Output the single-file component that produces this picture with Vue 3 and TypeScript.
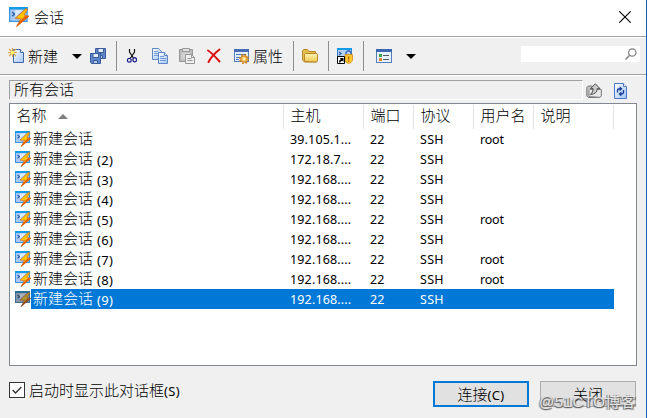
<script setup lang="ts">
interface Session {
  name: string
  suffix: string
  host: string
  user: string
}

const columns: string[] = ['名称', '主机', '端口', '协议', '用户名', '说明']

const hosts = ['39.105.1...', '172.18.7...', ...Array<string>(7).fill('192.168....')]
const rootRows = [0, 4, 6, 7]
const sessions: Session[] = hosts.map((host, i) => ({
  name: '新建会话',
  suffix: i ? `(${i + 1})` : '',
  host,
  user: rootRows.includes(i) ? 'root' : '',
}))
const selected = 8
</script>

<template>
  <svg class="defs" width="0" height="0">
    <defs>
      <linearGradient id="bolt" x1="0" y1="0" x2="0" y2="1">
        <stop offset="0" stop-color="#ffb000" />
        <stop offset=".45" stop-color="#ffc800" />
        <stop offset="1" stop-color="#f06a00" />
      </linearGradient>
      <linearGradient id="page" x1="0" y1="0" x2="1" y2="1">
        <stop offset="0" stop-color="#ffffff" />
        <stop offset="1" stop-color="#9fc4f6" />
      </linearGradient>
      <linearGradient id="fold" x1="0" y1="0" x2="0" y2="1">
        <stop offset="0" stop-color="#fff3b0" />
        <stop offset="1" stop-color="#f0c850" />
      </linearGradient>
      <symbol id="session" viewBox="0 0 16 16">
        <rect x=".5" y=".5" width="14" height="11" fill="#a9c9f2" stroke="#3a94e0" />
        <path d="M0 0h15v2H0z" fill="#149be8" />
        <path d="M2.500 4l2 1.700-2 1.700" fill="none" stroke="#2f63a8" stroke-width="1.200" />
        <path d="M5 2.500h6L5 8z" fill="#dcebfb" />
        <path d="M13.500 1.200L5 9l4.300.7-3.300 6L16 7.300l-4-.9 3-4.400z" fill="url(#bolt)" stroke="#c4551a" stroke-width=".5" />
        <path d="M16 7.300L6 15.700l1.200-2.300L13 7z" fill="#e65c00" />
      </symbol>
    </defs>
  </svg>

  <div class="window">
    <header class="title">
      <svg class="logo" viewBox="0 0 16 16"><use href="#session" /></svg>
      <span>会话</span>
      <svg class="close" viewBox="0 0 12 12"><path d="M.3.3l11.4 11.4M11.7.3L.3 11.7" stroke="#000" stroke-width="1.1" /></svg>
    </header>

    <div class="toolbar">
      <svg class="ico new" viewBox="0 0 16 16">
        <path d="M5.5 1.5h7l3 3v10h-10z" fill="url(#page)" stroke="#4169a8" />
        <path d="M12.5 1.5v3h3" fill="#fff" stroke="#4169a8" />
        <path d="M4.5 0v9M0 4.5h9M1 1l7 7M8 1L1 8" stroke="#d9a540" stroke-width="1.1" />
        <rect x="3" y="3" width="3" height="3" fill="#fff06a" />
      </svg>
      <span class="word">新建</span>
      <svg class="drop drop-new" viewBox="0 0 10 5"><path d="M0 0h10L5 5z" /></svg>
      <svg class="ico save" viewBox="0 0 16 16">
        <g stroke="#3a5a9e">
          <path d="M5.5.5h10v10h-9l-1-1z" fill="#5f86c9" />
          <path d="M8 .5h5.500v4H8z" fill="#e3edf9" />
          <path d="M8.500 7.500h4v3h-4z" fill="#b6c9e8" />
          <path d="M.5 5.500h10v10h-9l-1-1z" fill="#5f86c9" />
          <path d="M3 5.500h5.500v4H3z" fill="#e3edf9" />
          <path d="M3.500 12.500h4v3h-4z" fill="#b6c9e8" />
        </g>
      </svg>
      <i class="sep s1"></i>
      <svg class="ico cut" viewBox="0 0 16 16">
        <path d="M5.500 1v3l4.300 6.500M10.500 1v3L6.200 10.500" fill="none" stroke="#111" stroke-width="1.200" />
        <g fill="none" stroke="#20208c" stroke-width="1.200"><circle cx="5.300" cy="12.300" r="1.900" /><ellipse cx="10.700" cy="11.800" rx="1.800" ry="2.100" /></g>
      </svg>
      <svg class="ico copy" viewBox="0 0 16 16">
        <g fill="url(#page)" stroke="#5d84c4">
          <path d="M.5.5h6l3 3v8h-9z" /><path d="M6.500 4.500h6l3 3v8h-9z" /><path d="M12.500 4.500v3h3" />
        </g>
        <path d="M2 3.500h4M2 5.500h4M2 7.500h4M8 8.500h4M8 10.500h6M8 12.500h6" stroke="#749bd8" />
      </svg>
      <svg class="ico paste" viewBox="0 0 16 16">
        <g stroke="#979797">
          <path d="M.5 1.500h13v12H.5z" fill="#b9b9b9" /><path d="M2.500 4.500h9v7h-9z" fill="#d2d2d2" stroke="none" />
          <path d="M3.500.5h7v3h-7z" fill="#e0e0e0" />
          <path d="M6.500 6.500h6l3 3v6h-9z" fill="#eee" /><path d="M12.500 6.500v3h3M8.500 10.500h4M8.500 12.500h5" fill="none" />
        </g>
      </svg>
      <svg class="ico del" viewBox="0 0 16 16"><path d="M2 2.500C6 5 10 9.500 13.500 13.500M13.500 1.500C9 5 5 9 2.500 14" fill="none" stroke="#dc1010" stroke-width="2" stroke-linecap="round" /></svg>
      <svg class="ico prop" viewBox="0 0 16 16">
        <rect x=".5" y="1.500" width="14" height="12" fill="#e4edfb" stroke="#577dbe" />
        <path d="M0 1h15v3H0z" fill="#456cb5" /><path d="M2 6.500h10M2 9.500h6M2 11.500h3" stroke="#4978c4" stroke-width="1.200" />
        <circle cx="10" cy="11" r="3.200" fill="#f4c75b" stroke="#d18f2e" stroke-width="1.200" />
        <circle cx="10" cy="11" r="4.300" fill="none" stroke="#c27b1d" stroke-width="1.500" stroke-dasharray="1.700 1.680" /><circle cx="10" cy="11" r="1.200" fill="#fff0c0" />
      </svg>
      <span class="word">属性</span>
      <i class="sep s2"></i>
      <svg class="ico folder" viewBox="0 0 16 16">
        <path d="M.5 12V3l1-1.500h4L7 3.500h6.500v3h2v6l-1 1.500h-12z" fill="#e6bd4d" stroke="#b8892a" />
        <path d="M2.500 13.500v-7l1-1h11.500l.5 1v6l-1 1.500z" fill="url(#fold)" stroke="#b8892a" />
      </svg>
      <i class="sep s3"></i>
      <svg class="ico link" viewBox="0 0 16 16">
        <rect x=".5" y=".5" width="14" height="11" fill="#b5d2f5" stroke="#3e80c5" /><path d="M0 0h15v2H0z" fill="#149be8" />
        <path d="M2 4l2 1.500L2 7" fill="none" stroke="#285fa8" stroke-width="1.200" />
        <path d="M9 8V4.500l1.500-1.500h2L14 4.500V8" fill="none" stroke="#3a67b4" stroke-width="1.400" />
        <path d="M8 6.500h7.500v6q-1 2.500-4 3-3.500-1-3.500-4z" fill="#ffc531" stroke="#d08d22" stroke-width=".8" /><path d="M11.700 8.500v3M11.700 12.500v1.300" stroke="#a45a00" stroke-width="1.200" />
        <path d="M.5 8.500h7v7h-7z" fill="#fff" stroke="#000" /><path d="M2.500 10h4v4L5.300 12.800Q3.500 13 3 15L2 14q.3-2.500 2-2.700z" fill="#000" />
      </svg>
      <i class="sep s4"></i>
      <svg class="ico view" viewBox="0 0 16 16">
        <rect x=".5" y="1.500" width="15" height="13" fill="#e7f0fb" stroke="#577dbe" /><path d="M0 1h16v3H0z" fill="#3b65af" />
        <path d="M3 6h3v3H3z" fill="#38a348" /><path d="M3 10h3v3H3z" fill="#df872c" /><path d="M7 7.500h6M7 11.500h6" stroke="#4e596b" />
      </svg>
      <svg class="drop drop-view" viewBox="0 0 10 5"><path d="M0 0h10L5 5z" /></svg>
      <div class="search">
        <svg viewBox="0 0 12 12"><circle cx="7.300" cy="4.500" r="3.700" fill="none" stroke="#808080" stroke-width="1.200" /><path d="M4.600 7.200L.5 11.400" stroke="#808080" stroke-width="1.400" /></svg>
      </div>
    </div>

    <div class="pathbar">
      <div class="path">所有会话</div>
      <svg class="up" viewBox="0 0 16 16">
        <path d="M.8 13V4.500l1.500-1.500h4l1.500 2h5.500v2h2v6l-1.500 1.500h-11.500z" fill="#c2c2c2" stroke="#777" />
        <path d="M3 13.500v-6l1-1h11.300v6l-1.500 1.800z" fill="#e8e8e8" stroke="#888" />
        <path d="M9.300.8L4.500 5.600h2.700Q7.200 9.500 4.300 11.500 11 11.300 11.300 5.600H14z" fill="#c9c9c9" stroke="#555" />
      </svg>
      <svg class="refresh" viewBox="0 0 13 16">
        <path d="M.5.5h9l3 3v12H.5z" fill="url(#page)" stroke="#4a78c6" /><path d="M9.500.5v3h3" fill="#fff" stroke="#4a78c6" />
        <path d="M3.500 9.500V7.500Q3.700 5.800 6 5.800M9.500 7v2q-.2 2-2.500 2" fill="none" stroke="#173e9b" stroke-width="1.400" /><path d="M5.600 3.300L8.600 5.800 5.600 8.200zM7.400 8.600L4.400 11l3 2.500z" fill="#173e9b" />
      </svg>
    </div>

    <div class="list">
      <div class="row head">
        <span v-for="(c, i) in columns" :key="c" class="cell">{{ c }}<svg v-if="i === 0" class="sort" viewBox="0 0 10 5"><path d="M0 5h10L5 0z" fill="#808080" /></svg></span>
      </div>
      <div v-for="(s, i) in sessions" :key="i" class="row item" :class="{ selected: i === selected }">
        <span class="name">
          <span class="mark"><svg viewBox="0 0 16 16"><use href="#session" /></svg></span>
          <span class="label">{{ s.name }}<span v-if="s.suffix" class="suffix">{{ s.suffix }}</span></span>
        </span>
        <span class="val">{{ s.host }}</span>
        <span class="val">22</span>
        <span class="val ssh">SSH</span>
        <span class="val user">{{ s.user }}</span>
        <span class="val"></span>
      </div>
    </div>

    <footer class="foot">
      <span class="box"><svg viewBox="0 0 16 16"><path d="M3 8l3.300 3.500L13 4.500" fill="none" stroke="#333" stroke-width="1.500" /></svg></span>
      <span class="opt">启动时显示此对话框<span class="lat">(S)</span></span>
      <button class="btn primary">连接<span class="lat">(C)</span></button>
      <button class="btn">关闭</button>
      <span class="watermark">@51CTO博客</span>
    </footer>
  </div>
</template>

<style>
body { margin: 0; background: #fff; overflow: hidden; }
</style>

<style scoped>
.defs { position: absolute; }
.window {
  box-sizing: border-box; width: 647px; height: 418px; display: flex; flex-direction: column;
  background: #f0f0f0; border-right: 1px solid #1a5fb4; color: #000;
  font: 300 15px/20px "Noto Sans CJK SC", sans-serif;
}
svg { display: block; flex: none; }
.title { height: 36px; background: #fff; display: flex; align-items: center; padding: 0 15px 2px 9px; box-sizing: border-box; }
.logo { width: 20px; height: 20px; margin-right: 5px; }
.close { width: 12px; height: 12px; margin-left: auto; }
.toolbar { height: 40px; box-sizing: border-box; border-top: 1px solid #a0a0a0; border-bottom: 1px solid #fff; box-shadow: inset 0 1px #fff, inset 0 -1px #a0a0a0; display: flex; align-items: center; padding: 0 6px 0 8px; }
.ico { width: 16px; height: 16px; }
.word { width: 30px; margin-left: 4px; white-space: nowrap; }
.drop { width: 10px; height: 5px; }
.drop-new { margin-left: 14px; }
.save { margin-left: 8px; }
.sep { width: 1px; height: 30px; background: #8d8d8d; flex: none; }
.s1 { margin-left: 10px; }
.cut { margin-left: 7px; }
.copy { margin-left: 12px; }
.paste { margin-left: 11px; }
.del { margin-left: 11px; }
.prop { margin-left: 12px; }
.prop + .word { margin-left: 3px; }
.s2 { margin-left: 10px; }
.folder { margin-left: 8px; }
.s3 { margin-left: 10px; }
.link { margin-left: 8px; }
.s4 { margin-left: 10px; }
.view { margin-left: 12px; }
.drop-view { margin-left: 14px; }
.search { width: 119px; height: 16px; margin: 0 0 4px auto; background: #fff; display: flex; align-items: center; justify-content: flex-end; padding-right: 3px; box-sizing: border-box; }
.search svg { width: 12px; height: 12px; }
.pathbar { height: 27px; display: flex; padding: 4px 19px 0 9px; box-sizing: border-box; }
.path { width: 574px; height: 20px; box-sizing: border-box; border: 1px solid #a0a0a0; border-right-color: #fff; border-bottom-color: #fff; line-height: 16px; padding-left: 4px; flex: none; }
.up { width: 16px; height: 16px; margin: 3px 12px 0 3px; }
.refresh { width: 13px; height: 16px; margin-top: 3px; }
.list { width: 628px; height: 263px; box-sizing: border-box; margin-left: 9px; background: #fff; border: 1px solid #828790; }
.row { display: grid; grid-template-columns: 274px 80px 50px 60px 60px 80px; height: 20px; }
.head { height: 25px; }
.cell { height: 24px; margin-top: 1px; box-sizing: border-box; border-right: 1px solid #e2e2e2; padding: 0 0 4px 6.5px; line-height: 20px; display: flex; align-items: center; }
.sort { width: 10px; height: 5px; margin: 3px 0 0 11px; }
.name { display: flex; }
.mark { width: 21px; padding: 2px 0 0 5px; box-sizing: border-box; flex: none; }
.mark svg { width: 16px; height: 16px; }
.label { flex: 1; padding-left: 2px; line-height: 18px; height: 20px; }
.suffix { margin-left: 4px; }
.suffix, .val, .lat { font-family: "Noto Sans", sans-serif; font-weight: 400; font-size: 12.5px; }
.suffix, .lat { font-size: 13px; letter-spacing: .3px; line-height: 1; }
.suffix { position: relative; top: 1px; }
.val { padding-left: 6px; line-height: 22px; height: 20px; box-sizing: border-box; white-space: nowrap; letter-spacing: .15px; }
.ssh { letter-spacing: .3px; }
.user { letter-spacing: -.2px; }
.selected .label, .selected .val { background: #0078d7; color: #fff; }
.selected .mark svg { filter: brightness(.75) saturate(.7); }
.foot { flex: 1; display: flex; padding: 15px 10px 0 9px; position: relative; }
.box { width: 16px; height: 16px; box-sizing: border-box; border: 1px solid #333; background: #fff; margin-top: 1px; }
.box svg { width: 14px; height: 14px; }
.opt { margin-left: 4px; line-height: 17px; white-space: nowrap; }
.btn { width: 96px; height: 26px; padding: 0; border: 1px solid #adadad; background: #e1e1e1; font: 300 15px/22px "Noto Sans CJK SC", sans-serif; color: #000; }
.primary { border: 2px solid #0078d7; margin: 0 11px 0 auto; line-height: 20px; }
.watermark { position: absolute; left: 539px; top: 26px; font: 15px/20px "Liberation Sans", "Noto Sans CJK SC", sans-serif; letter-spacing: .5px; color: #e4e4e4; text-shadow: -1px 1px 1px #666, 1px 1px 1px #555; white-space: nowrap; }
</style>
